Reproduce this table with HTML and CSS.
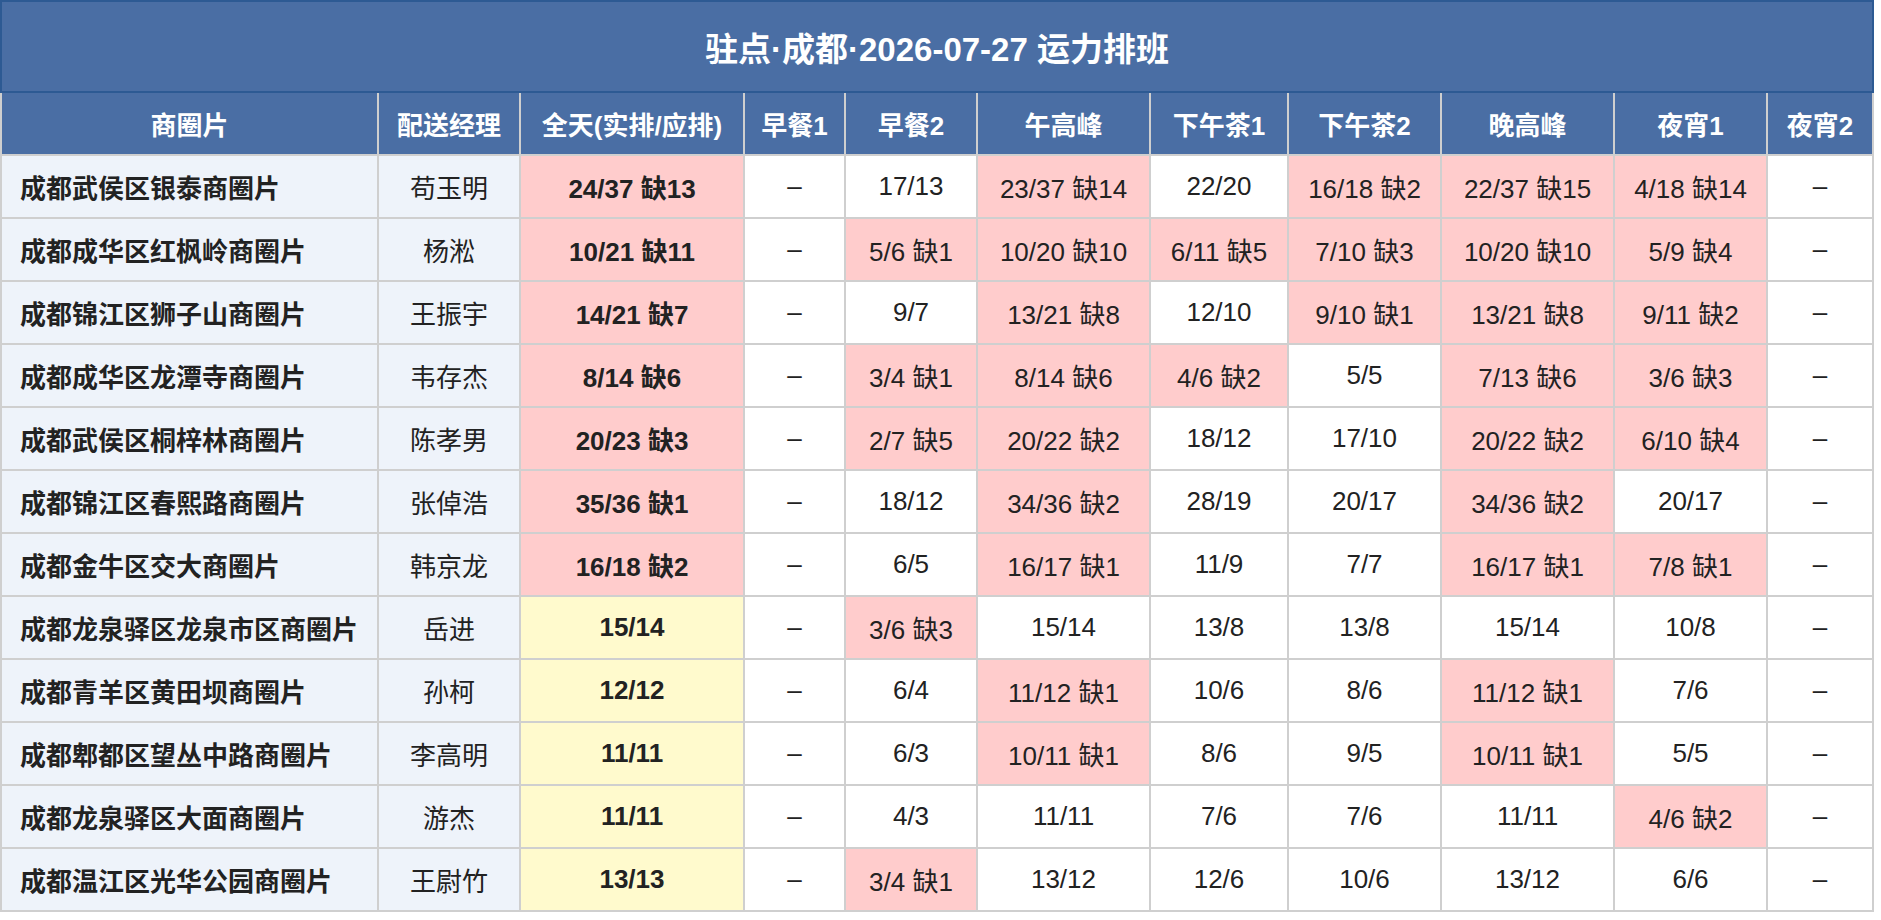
FILE: index.html
```html
<!DOCTYPE html>
<html lang="zh-CN">
<head>
<meta charset="utf-8">
<title>驻点·成都·2026-07-27 运力排班</title>
<link rel="stylesheet" href="styles.css">
</head>
<body>
<div class="sheet">
  <div class="title">驻点·成都·2026-07-27 运力排班</div>
  <table class="grid">
    <colgroup>
      <col class="c-area"><col class="c-mgr"><col class="c-all"><col class="c-b1"><col class="c-b2">
      <col class="c-lunch"><col class="c-t1"><col class="c-t2"><col class="c-dinner"><col class="c-n1"><col class="c-n2">
    </colgroup>
    <thead>
      <tr>
        <th>商圈片</th><th>配送经理</th><th>全天(实排/应排)</th><th>早餐1</th><th>早餐2</th><th>午高峰</th><th>下午茶1</th><th>下午茶2</th><th>晚高峰</th><th>夜宵1</th><th>夜宵2</th>
      </tr>
    </thead>
    <tbody>
      <tr>
        <td class="area">成都武侯区银泰商圈片</td><td class="mgr">苟玉明</td><td class="all short">24/37 缺13</td><td>–</td><td>17/13</td><td class="short">23/37 缺14</td><td>22/20</td><td class="short">16/18 缺2</td><td class="short">22/37 缺15</td><td class="short">4/18 缺14</td><td>–</td>
      </tr>
      <tr>
        <td class="area">成都成华区红枫岭商圈片</td><td class="mgr">杨淞</td><td class="all short">10/21 缺11</td><td>–</td><td class="short">5/6 缺1</td><td class="short">10/20 缺10</td><td class="short">6/11 缺5</td><td class="short">7/10 缺3</td><td class="short">10/20 缺10</td><td class="short">5/9 缺4</td><td>–</td>
      </tr>
      <tr>
        <td class="area">成都锦江区狮子山商圈片</td><td class="mgr">王振宇</td><td class="all short">14/21 缺7</td><td>–</td><td>9/7</td><td class="short">13/21 缺8</td><td>12/10</td><td class="short">9/10 缺1</td><td class="short">13/21 缺8</td><td class="short">9/11 缺2</td><td>–</td>
      </tr>
      <tr>
        <td class="area">成都成华区龙潭寺商圈片</td><td class="mgr">韦存杰</td><td class="all short">8/14 缺6</td><td>–</td><td class="short">3/4 缺1</td><td class="short">8/14 缺6</td><td class="short">4/6 缺2</td><td>5/5</td><td class="short">7/13 缺6</td><td class="short">3/6 缺3</td><td>–</td>
      </tr>
      <tr>
        <td class="area">成都武侯区桐梓林商圈片</td><td class="mgr">陈孝男</td><td class="all short">20/23 缺3</td><td>–</td><td class="short">2/7 缺5</td><td class="short">20/22 缺2</td><td>18/12</td><td>17/10</td><td class="short">20/22 缺2</td><td class="short">6/10 缺4</td><td>–</td>
      </tr>
      <tr>
        <td class="area">成都锦江区春熙路商圈片</td><td class="mgr">张倬浩</td><td class="all short">35/36 缺1</td><td>–</td><td>18/12</td><td class="short">34/36 缺2</td><td>28/19</td><td>20/17</td><td class="short">34/36 缺2</td><td>20/17</td><td>–</td>
      </tr>
      <tr>
        <td class="area">成都金牛区交大商圈片</td><td class="mgr">韩京龙</td><td class="all short">16/18 缺2</td><td>–</td><td>6/5</td><td class="short">16/17 缺1</td><td>11/9</td><td>7/7</td><td class="short">16/17 缺1</td><td class="short">7/8 缺1</td><td>–</td>
      </tr>
      <tr>
        <td class="area">成都龙泉驿区龙泉市区商圈片</td><td class="mgr">岳进</td><td class="all full">15/14</td><td>–</td><td class="short">3/6 缺3</td><td>15/14</td><td>13/8</td><td>13/8</td><td>15/14</td><td>10/8</td><td>–</td>
      </tr>
      <tr>
        <td class="area">成都青羊区黄田坝商圈片</td><td class="mgr">孙柯</td><td class="all full">12/12</td><td>–</td><td>6/4</td><td class="short">11/12 缺1</td><td>10/6</td><td>8/6</td><td class="short">11/12 缺1</td><td>7/6</td><td>–</td>
      </tr>
      <tr>
        <td class="area">成都郫都区望丛中路商圈片</td><td class="mgr">李高明</td><td class="all full">11/11</td><td>–</td><td>6/3</td><td class="short">10/11 缺1</td><td>8/6</td><td>9/5</td><td class="short">10/11 缺1</td><td>5/5</td><td>–</td>
      </tr>
      <tr>
        <td class="area">成都龙泉驿区大面商圈片</td><td class="mgr">游杰</td><td class="all full">11/11</td><td>–</td><td>4/3</td><td>11/11</td><td>7/6</td><td>7/6</td><td>11/11</td><td class="short">4/6 缺2</td><td>–</td>
      </tr>
      <tr>
        <td class="area">成都温江区光华公园商圈片</td><td class="mgr">王尉竹</td><td class="all full">13/13</td><td>–</td><td class="short">3/4 缺1</td><td>13/12</td><td>12/6</td><td>10/6</td><td>13/12</td><td>6/6</td><td>–</td>
      </tr>
    </tbody>
  </table>
</div>
</body>
</html>
```

FILE: styles.css
```css
* { box-sizing: border-box; }

html, body {
  margin: 0;
  padding: 0;
  background: #ffffff;
}

body {
  font-family: "Liberation Sans", "Noto Sans CJK SC", sans-serif;
  color: #222222;
}

.sheet {
  width: 1874px;
}

.title {
  height: 93px;
  background: #4a6ea4;
  border: 2px solid #2d5a93;
  color: #ffffff;
  font-size: 33px;
  font-weight: 700;
  display: flex;
  align-items: center;
  justify-content: center;
}

.grid {
  width: 1874px;
  table-layout: fixed;
  border-collapse: separate;
  border-spacing: 0;
  font-size: 26px;
}

.c-area { width: 379px; }
.c-mgr { width: 142px; }
.c-all { width: 224px; }
.c-b1 { width: 101px; }
.c-b2 { width: 132px; }
.c-lunch { width: 173px; }
.c-t1 { width: 138px; }
.c-t2 { width: 153px; }
.c-dinner { width: 173px; }
.c-n1 { width: 153px; }
.c-n2 { width: 106px; }

.grid tr { height: 63px; }

.grid th,
.grid td {
  border-right: 2px solid #cfcfcf;
  border-bottom: 2px solid #cfcfcf;
  padding: 0 4px;
  text-align: center;
  vertical-align: middle;
  white-space: nowrap;
  background: #ffffff;
  font-weight: 400;
}

.grid th:first-child,
.grid td:first-child {
  border-left: 2px solid #cfcfcf;
}

.grid th {
  background: #4a6ea4;
  color: #ffffff;
  font-weight: 700;
}

.grid td.area {
  text-align: left;
  padding-left: 18px;
  font-weight: 700;
  background: #eef3fa;
}

.grid td.mgr {
  background: #eef3fa;
}

.grid td.all {
  font-weight: 700;
}

.grid td.short {
  background: #ffcccc;
}

.grid td.full {
  background: #fffacd;
}
```
